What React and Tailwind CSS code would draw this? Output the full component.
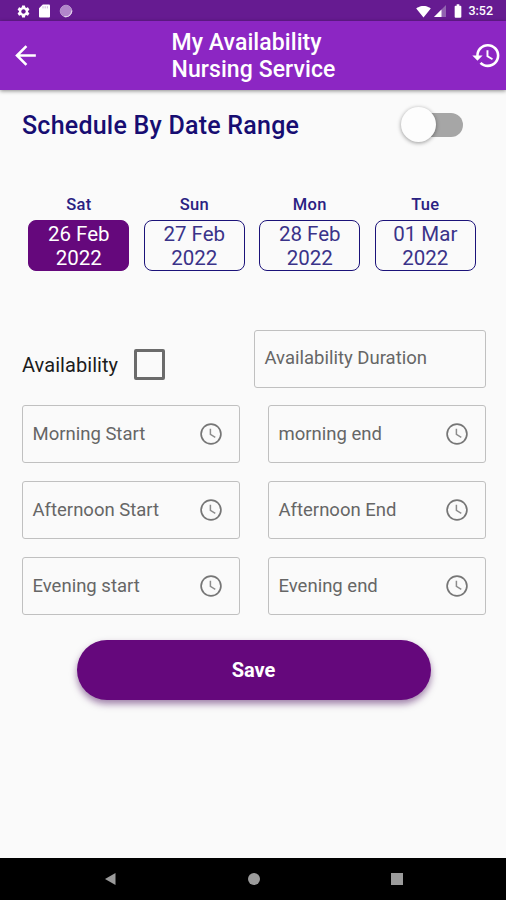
import { useState } from "react"
import { MdArrowBack, MdBatteryFull, MdHistory, MdSettings, MdSignalWifi4Bar } from "react-icons/md";

const days = [
  { name: "Sat", date: "26 Feb", year: "2022" },
  { name: "Sun", date: "27 Feb", year: "2022" },
  { name: "Mon", date: "28 Feb", year: "2022" },
  { name: "Tue", date: "01 Mar", year: "2022" },
];

const timeFields = [
  "Morning Start",
  "morning end",
  "Afternoon Start",
  "Afternoon End",
  "Evening start",
  "Evening end",
];

function StatusBar() {
  return (
    <div className="h-[21px] bg-[#661b91] text-white flex items-center justify-between pl-4 pr-[13px]">
      <div className="flex items-center pt-px">
        <MdSettings size={15} />
        <svg className="ml-2" width="11" height="14" viewBox="0 0 11 14">
          <path d="M3.8 0.5H10a1 1 0 0 1 1 1v11a1 1 0 0 1-1 1H1a1 1 0 0 1-1-1V4.3z" fill="#fff" />
          <path d="M4 2.2v2.2M6.2 2.2v2.2M8.4 2.2v2.2" stroke="#c9b0d8" strokeWidth="0.9" />
        </svg>
        <svg className="ml-[9px]" width="14" height="14" viewBox="0 0 14 14">
          <circle cx="7" cy="7" r="5.8" fill="#b286cb" stroke="#b894cd" strokeWidth="1" />
          <path d="M12.8 6.5a6 6 0 0 1-7.5 6" fill="none" stroke="#e3d2ec" strokeWidth="1.2" />
        </svg>
      </div>

      <div className="flex items-center pt-px">
        <MdSignalWifi4Bar size={15} />
        <svg className="ml-[3px]" width="12" height="12" viewBox="0 0 12 12">
          <path d="M12 0v12H0z" fill="#9163b0" />
          <path d="M7.5 4.5V12H0z" fill="#fff" />
        </svg>
        <MdBatteryFull size={16} className="ml-1" />
        <span className="ml-[2px] text-[12.5px] leading-none font-medium">3:52</span>
      </div>
    </div>
  );
}

function ClockIcon() {
  return (
    <svg width="24" height="24" viewBox="0 0 24 24" fill="none">
      <circle cx="12" cy="12" r="9.9" stroke="#767676" strokeWidth="1.7" />
      <path d="M11.4 6.8v5.5l4.9 3" stroke="#8c8c8c" strokeWidth="1.5" />
    </svg>
  );
}

function TimeField({ label }) {
  return (
    <div className="h-[58px] flex items-center justify-between border border-[#c0c0c0] rounded-[3px] pl-[10px] pr-[16px]">
      <span className="pt-px text-[18.5px] text-[#666]">{label}</span>
      <ClockIcon />
    </div>
  );
}

function App() {
  const [selected, setSelected] = useState(0);

  return (
    <div className="w-[506px] h-[900px] flex flex-col bg-[#fafafa] font-[Roboto,sans-serif] overflow-hidden">
      <StatusBar />

      {/* App bar */}
      <header className="h-[69px] shrink-0 flex items-center bg-[#8c26c3] text-white shadow-[0_1px_4px_rgba(0,0,0,0.45)] pl-[10px] pr-1">
        <MdArrowBack size={31} />
        <h1 className="ml-[130.5px] pt-px text-[23px] leading-[27px] tracking-[0.08px] font-medium">
          My Availability
          <br />
          Nursing Service
        </h1>
        <MdHistory size={31} className="ml-auto" />
      </header>

      <main className="flex-1 flex flex-col pl-[21.5px] pr-[20.5px]">
        {/* Date range switch */}
        <div className="h-[70px] flex items-center justify-between pl-[0.5px] pr-[22.5px]">
          <h2 className="pt-px text-[25px] tracking-[0.23px] font-medium text-[#170d72]">Schedule By Date Range</h2>
          <div className="relative w-[58px] h-6 rounded-full bg-[#a6a6a6]">
            <div className="absolute -left-[4px] -top-[6px] size-[35px] rounded-full bg-[#fdfdfd] shadow-[0_1px_4px_rgba(0,0,0,0.4)]" />
          </div>
        </div>

        {/* Days */}
        <div className="mt-[34px] pl-[6.8px] flex gap-[14.5px]">
          {days.map((day, i) => (
            <div key={day.date} className="w-[101px] text-center">
              <p className="h-[26px] leading-[22px] text-[16.5px] tracking-[0.3px] font-medium text-[#2a2182]">{day.name}</p>
              <button
                onClick={() => setSelected(i)}
                className={
                  i === selected
                    ? "w-full h-[51px] rounded-lg border-[1.5px] border-[#65087c] bg-[#65087c] text-white text-[20.5px] leading-[24px]"
                    : "w-full h-[51px] rounded-lg border-[1.5px] border-[#1b1279] text-[#3a3389] text-[20.5px] leading-[24px]"
                }
              >
                {day.date}
                <br />
                {day.year}
              </button>
            </div>
          ))}
        </div>

        {/* Availability */}
        <div className="mt-[58px] flex">
          <div className="flex items-center pt-[12px]">
            <span className="w-[112px] pl-[0.5px] text-[20px] tracking-[0.06px] text-[#1c1c1c]">Availability</span>
            <div className="size-[31px] rounded-[2px] border-[3px] border-[#6b6b6b]" />
          </div>
          <div className="ml-auto w-[232px] h-[58px] flex items-center border border-[#c0c0c0] rounded-[3px] pl-[10px]">
            <span className="pt-px text-[18.5px] text-[#666]">Availability Duration</span>
          </div>
        </div>

        <div className="mt-[17.5px] grid grid-cols-2 gap-x-7 gap-y-[18px]">
          {timeFields.map((label) => (
            <TimeField key={label} label={label} />
          ))}
        </div>

        <button className="mt-[25px] self-center w-[354px] h-[60px] rounded-full bg-[#65087c] text-white text-[20px] font-bold shadow-[0_4px_7px_rgba(70,10,90,0.5)]">
          Save
        </button>
      </main>

      {/* Android navigation */}
      <nav className="h-[42px] shrink-0 bg-black flex items-center justify-between pl-[104px] pr-[103px]">
        <svg width="12" height="12" viewBox="0 0 12 12"><path d="M11.5 0v12L1 6z" fill="#9b9b9b" /></svg>
        <div className="size-3 rounded-full bg-[#9b9b9b]" />
        <div className="size-3 bg-[#9b9b9b]" />
      </nav>
    </div>
  );
}

export default App;
